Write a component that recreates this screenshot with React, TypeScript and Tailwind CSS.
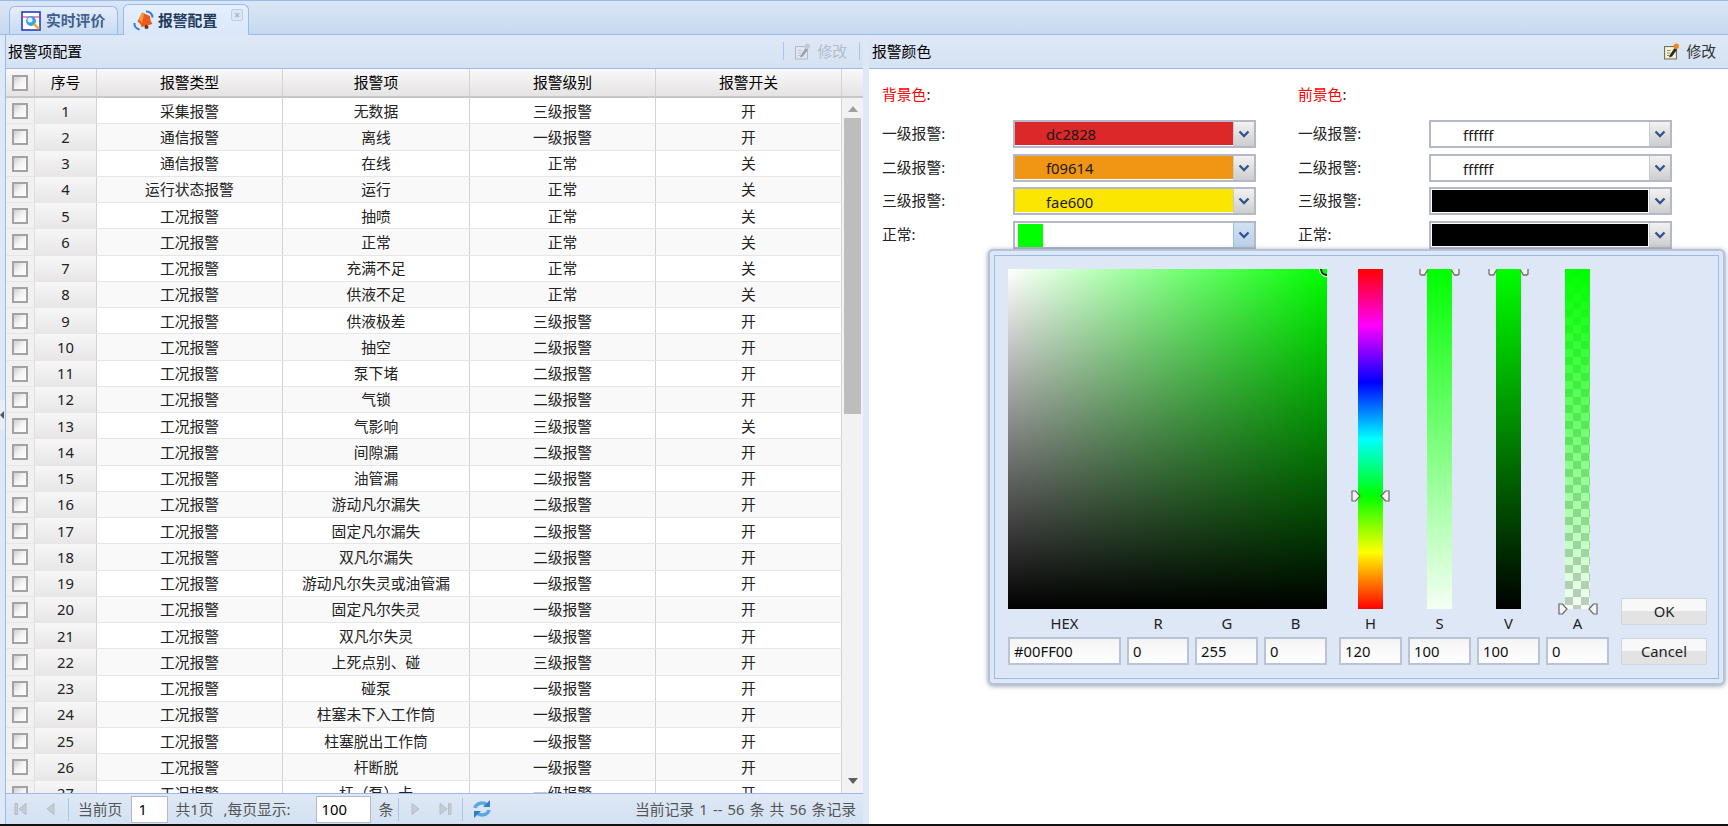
import type { ReactNode } from 'react';

const rows = [
	['采集报警', '无数据', '三级报警', '开'],
	['通信报警', '离线', '一级报警', '开'],
	['通信报警', '在线', '正常', '关'],
	['运行状态报警', '运行', '正常', '关'],
	['工况报警', '抽喷', '正常', '关'],
	['工况报警', '正常', '正常', '关'],
	['工况报警', '充满不足', '正常', '关'],
	['工况报警', '供液不足', '正常', '关'],
	['工况报警', '供液极差', '三级报警', '开'],
	['工况报警', '抽空', '二级报警', '开'],
	['工况报警', '泵下堵', '二级报警', '开'],
	['工况报警', '气锁', '二级报警', '开'],
	['工况报警', '气影响', '三级报警', '关'],
	['工况报警', '间隙漏', '二级报警', '开'],
	['工况报警', '油管漏', '二级报警', '开'],
	['工况报警', '游动凡尔漏失', '二级报警', '开'],
	['工况报警', '固定凡尔漏失', '二级报警', '开'],
	['工况报警', '双凡尔漏失', '二级报警', '开'],
	['工况报警', '游动凡尔失灵或油管漏', '一级报警', '开'],
	['工况报警', '固定凡尔失灵', '一级报警', '开'],
	['工况报警', '双凡尔失灵', '一级报警', '开'],
	['工况报警', '上死点别、碰', '三级报警', '开'],
	['工况报警', '碰泵', '一级报警', '开'],
	['工况报警', '柱塞未下入工作筒', '一级报警', '开'],
	['工况报警', '柱塞脱出工作筒', '一级报警', '开'],
	['工况报警', '杆断脱', '一级报警', '开'],
	['工况报警', '杆（泵）卡', '一级报警', '开'],
];

const fontClass = "font-['Noto_Sans','Noto_Sans_CJK_SC',sans-serif]";

function Checkbox() {
	return (
		<span className="block h-[16px] w-[16px] border-2 border-[#a3a3a3] bg-linear-to-br/srgb from-[#cfcfcf] via-[#f4f4f4] to-white" />
	);
}

function EditIcon({ faded = false }: { faded?: boolean }) {
	return (
		<svg width="15" height="17" viewBox="0 0 15 17" className={faded ? 'opacity-35 grayscale' : ''}>
			<rect x="0.5" y="3.5" width="12" height="12.500" fill="#ece6c4" stroke="#6f6f62" />
			<rect x="2" y="5" width="9" height="9.500" fill="#f7f3dc" />
			<path d="M3 7.500h3.500M3 10h3M3 12.500h2.500" stroke="#8a8a70" />
			<path d="M5.500 12.500 10.500 5l2.500 1.800-5 6.700-2.800 1z" fill="#2e2b1c" />
			<circle cx="12.300" cy="3.200" r="2.700" fill="#ee8a1d" />
		</svg>
	);
}

function PanelHeader({ children }: { children: ReactNode }) {
	return (
		<div className="flex h-[34px] shrink-0 items-center border-b border-[#99bbe8] bg-linear-to-b/srgb from-[#dfe8f6] to-[#d5e2f2] pb-px text-black">
			{children}
		</div>
	);
}

function Cell({ width, children, divider = true }: { width: string; children: ReactNode; divider?: boolean }) {
	return (
		<div className={`flex h-full shrink-0 items-center justify-center ${width} ${divider ? 'border-r border-[#d3d3d3]' : ''}`}>
			{children}
		</div>
	);
}

function AlarmGrid() {
	return (
		<div className="flex min-h-0 flex-1 flex-col bg-white">
			<div className="flex h-[29px] shrink-0 items-center border-b-2 border-[#c9c7c7] bg-linear-to-b/srgb from-[#f9f9f9] to-[#e5e3e3] text-black">
				<Cell width="w-[29px]"><Checkbox /></Cell>
				<Cell width="w-[62px]">序号</Cell>
				<Cell width="w-[186px]">报警类型</Cell>
				<Cell width="w-[187px]">报警项</Cell>
				<Cell width="w-[186px]">报警级别</Cell>
				<Cell width="w-[186px]">报警开关</Cell>
			</div>
			<div className="flex min-h-0 flex-1">
				<div className="min-w-0 flex-1 overflow-hidden">
					{rows.map((row, index) => (
						<div
							key={index}
							className={`flex h-[26.25px] items-center border-b border-[#e6e6e6] text-[#222] ${index % 2 ? 'bg-[#f9f9f9]' : 'bg-white'}`}
						>
							<div className="flex h-full w-[29px] shrink-0 items-center justify-center border-r border-[#e0e0e0] bg-[#f2f1f1] pt-px">
								<Checkbox />
							</div>
							<div className="flex h-full w-[62px] shrink-0 items-center justify-center border-r border-[#d3d3d3] bg-linear-to-b/srgb from-[#f7f7f7] to-[#e8e6e6]">
								{index + 1}
							</div>
							<Cell width="w-[186px]">{row[0]}</Cell>
							<Cell width="w-[187px]">{row[1]}</Cell>
							<Cell width="w-[186px]">{row[2]}</Cell>
							<Cell width="w-[186px]">{row[3]}</Cell>
						</div>
					))}
				</div>
				<div className="flex w-[21px] shrink-0 flex-col items-center bg-[#f2f2f2] pt-[8px]">
					<svg width="10" height="6" viewBox="0 0 10 6" className="mb-[6px] shrink-0">
						<path d="M5 0 10 6H0z" fill="#a0a0a0" />
					</svg>
					<div className="h-[296px] w-[17px] shrink-0 bg-[#bdbdbd]" />
					<div className="flex-1" />
					<svg width="10" height="6" viewBox="0 0 10 6" className="mb-[9px] shrink-0">
						<path d="M0 0h10L5 6z" fill="#5e5e5e" />
					</svg>
				</div>
			</div>
		</div>
	);
}

function PagerArrow({ d }: { d: string }) {
	return (
		<svg width="16" height="16" viewBox="0 0 16 16" className="shrink-0">
			<path d={d} fill="#c6ccd5" stroke="#b5bcc7" />
		</svg>
	);
}

function PagerSep() {
	return <span className="block h-[23px] w-px shrink-0 bg-[#a9c6ec]" />;
}

function Pager() {
	return (
		<div className="flex h-[31px] shrink-0 items-center border-t border-[#99bbe8] bg-linear-to-b/srgb from-[#dfe8f6] to-[#d3e1f1] text-[#555]">
			<span className="ml-[7px]"><PagerArrow d="M2 2.500h2.500v11H2zM13 2.500v11L6 8z" /></span>
			<span className="ml-[13px]"><PagerArrow d="M12 2.500v11L5 8z" /></span>
			<span className="ml-[10px]"><PagerSep /></span>
			<span className="ml-[9px]">当前页</span>
			<span className="ml-[9px] flex h-[27px] w-[37px] items-center border border-[#b5b8c8] bg-white pl-[6px] text-black">1</span>
			<span className="ml-[7px]">共1页</span>
			<span className="ml-[10px]">,每页显示:</span>
			<span className="ml-[25px] flex h-[27px] w-[55px] items-center border border-[#b5b8c8] bg-white pl-[5px] text-black">100</span>
			<span className="ml-[8px]">条</span>
			<span className="ml-[5px]"><PagerSep /></span>
			<span className="ml-[9px]"><PagerArrow d="M4 2.500v11L11 8z" /></span>
			<span className="ml-[13px]"><PagerArrow d="M3 2.500v11L10 8zM11.500 2.500H14v11h-2.500z" /></span>
			<span className="ml-[9px]"><PagerSep /></span>
			<svg width="20" height="20" viewBox="0 0 20 20" className="ml-[9px] shrink-0" fill="none">
				<path d="M3 9a7 6 0 0 1 12-3" stroke="#5aa6e2" strokeWidth="3.500" />
				<path d="M18 1v7h-7z" fill="#2f7fc8" />
				<path d="M17 11a7 6 0 0 1-12 3" stroke="#5aa6e2" strokeWidth="3.500" />
				<path d="M2 19v-7h7z" fill="#2f7fc8" />
			</svg>
			<span className="ml-auto pr-[7px] [word-spacing:1.300px]">当前记录 1 -- 56 条 共 56 条记录</span>
		</div>
	);
}

function ColorSelect({ fill, text, swatch = false, focused = false }: { fill: string; text?: string; swatch?: boolean; focused?: boolean }) {
	const inner = swatch ? 'pl-[3px] pt-px' : fill === 'bg-white' || fill === 'bg-black' ? 'p-px' : 'pb-px';
	return (
		<div className="flex h-[28px] items-stretch border-2 border-[#b5b8c8] bg-white">
			<div className={`flex min-w-0 flex-1 items-stretch ${inner}`}>
				{swatch ? (
					<div className={`${fill} w-[25px]`} />
				) : (
					<div className={`${fill} flex flex-1 items-center pl-[31px] pt-[2px] text-[#1a1a1a]`}>{text}</div>
				)}
			</div>
			<div className={`flex w-[21px] shrink-0 items-center justify-center border-l bg-linear-to-b/srgb ${focused ? 'border-[#9cbde6] from-[#d2e1f3] to-[#b9d0ea]' : 'border-[#c6c9d6] from-[#f2f2f2] to-[#cdcdcd]'}`}>
				<svg width="12" height="8" viewBox="0 0 12 8" fill="none">
					<path d="M1.500 1.500 6 6l4.500-4.500" stroke="#33568f" strokeWidth="2.400" />
				</svg>
			</div>
		</div>
	);
}

function ColorForm() {
	const labels = ['一级报警', '二级报警', '三级报警', '正常'];
	const back = [
		<ColorSelect key="a" fill="bg-[#dc2828]" text="dc2828" />,
		<ColorSelect key="b" fill="bg-[#f09614]" text="f09614" />,
		<ColorSelect key="c" fill="bg-[#fae600]" text="fae600" />,
		<ColorSelect key="d" fill="bg-[#00ff00]" swatch focused />,
	];
	const front = [
		<ColorSelect key="a" fill="bg-white" text="ffffff" />,
		<ColorSelect key="b" fill="bg-white" text="ffffff" />,
		<ColorSelect key="c" fill="bg-black" text="" />,
		<ColorSelect key="d" fill="bg-black" text="" />,
	];
	return (
		<div className="grid grid-cols-[131px_243px_42px_131px_243px] pl-[13px] pt-[13px] text-[#222]">
			<div className="col-span-2 h-[38px] leading-[24px]">
				<span className="text-[#ff0000]">背景色</span>:
			</div>
			<div />
			<div className="col-span-2 h-[38px] leading-[24px]">
				<span className="text-[#ff0000]">前景色</span>:
			</div>
			{labels.map((label, index) => (
				<div key={label} className="contents">
					<div className="flex h-[33.7px] items-start pt-[2px]">{label}:</div>
					<div>{back[index]}</div>
					<div />
					<div className="flex h-[33.7px] items-start pt-[2px]">{label}:</div>
					<div>{front[index]}</div>
				</div>
			))}
		</div>
	);
}

function Handle({ side, className }: { side: 'left' | 'right' | 'top'; className: string }) {
	const rotate = side === 'right' ? 'rotate-180' : '';
	if (side === 'top') {
		return (
			<svg width="9" height="7" viewBox="0 0 9 7" className={`absolute ${className}`}>
				<path d="M1 0v4.500q0 1.500 1.500 1.500H5.500L8.500 1" fill="#f2f2f2" stroke="#6d6d6d" strokeWidth="1.300" />
			</svg>
		);
	}
	return (
		<svg width="10" height="12" viewBox="0 0 10 12" className={`absolute ${rotate} ${className}`}>
			<path d="M1 1h3.500L9 6l-4.500 5H1z" fill="#f4f4f4" stroke="#666" strokeWidth="1.200" />
		</svg>
	);
}

function PickerField({ value }: { value: string }) {
	return (
		<div className="flex h-[28px] items-center border-2 border-[#b9c3d6] bg-linear-to-b/srgb from-[#f4f4f4] to-white pl-[4px] text-[#111]">
			{value}
		</div>
	);
}

function PickerColumn({ label, value, children }: { label: string; value: string; children: ReactNode }) {
	return (
		<div className="flex w-[63px] flex-col">
			<div className="flex h-[340px] justify-center">
				<div className="relative h-full w-[25px]">{children}</div>
			</div>
			<div className="flex h-[28px] items-center justify-center text-[#222]">{label}</div>
			<PickerField value={value} />
		</div>
	);
}

function PickerButton({ label }: { label: string }) {
	return (
		<div className="flex h-[27px] w-[86px] items-center justify-center rounded-[2px] border border-[#d0d5dc] bg-linear-to-b/srgb from-[#f8f8f8] from-50% to-[#e3e3e3] to-50% text-[#222]">
			{label}
		</div>
	);
}

function ColorPicker() {
	return (
		<div className={`absolute left-[988px] top-[249px] h-[436px] w-[737px] rounded-[5px] border-2 border-[#b4c3d9] bg-[#dee7f6] p-[4px] shadow-[0_1px_5px_rgba(70,90,120,0.6)] ${fontClass} text-[14.800px]`}>
			<div className="flex h-[424px] border border-[#99bbe8] pl-[13px] pt-[13px]">
				<div className="flex w-[319px] flex-col">
					<div className="h-[340px] bg-linear-to-r/srgb from-white to-[#00ff00]">
						<div className="relative h-full overflow-hidden bg-linear-to-b/srgb from-transparent to-black">
							<span className="absolute right-[-6px] top-[-6px] h-[13px] w-[13px] rounded-full border-2 border-[#222] outline outline-1 outline-white" />
						</div>
					</div>
					<div className="flex h-[28px] items-center text-[#222]">
						<span className="w-[113px] text-center">HEX</span>
						<span className="ml-[6px] w-[62px] text-center">R</span>
						<span className="ml-[7px] w-[62px] text-center">G</span>
						<span className="ml-[6px] w-[63px] text-center">B</span>
					</div>
					<div className="flex gap-[6px]">
						<div className="w-[113px]"><PickerField value="#00FF00" /></div>
						<div className="w-[62px]"><PickerField value="0" /></div>
						<div className="w-[63px]"><PickerField value="255" /></div>
						<div className="w-[63px]"><PickerField value="0" /></div>
					</div>
				</div>
				<div className="ml-[12px] flex gap-[6px]">
					<PickerColumn label="H" value="120">
						<div className="h-full bg-[linear-gradient(to_bottom,#f00,#f0f,#00f,#0ff,#0f0,#ff0,#f00)]" />
						<Handle side="left" className="left-[-7px] top-[221px]" />
						<Handle side="right" className="right-[-7px] top-[221px]" />
					</PickerColumn>
					<PickerColumn label="S" value="100">
						<div className="h-full bg-linear-to-b/srgb from-[#00ff00] to-[#f4fff4]" />
						<Handle side="top" className="left-[-8px] top-0" />
						<Handle side="top" className="right-[-8px] top-0 -scale-x-100" />
					</PickerColumn>
					<PickerColumn label="V" value="100">
						<div className="h-full bg-linear-to-b/srgb from-[#00ff00] to-black" />
						<Handle side="top" className="left-[-8px] top-0" />
						<Handle side="top" className="right-[-8px] top-0 -scale-x-100" />
					</PickerColumn>
					<PickerColumn label="A" value="0">
						<div className="h-full bg-[repeating-conic-gradient(#c9c9c9_0_25%,#ffffff_0_50%)] bg-[length:16px_16px]">
							<div className="h-full bg-linear-to-b/srgb from-[#00ff00] to-[#00ff000c]" />
						</div>
						<Handle side="left" className="left-[-7px] bottom-[-6px]" />
						<Handle side="right" className="right-[-8px] bottom-[-6px]" />
					</PickerColumn>
				</div>
				<div className="ml-[12px] flex h-[396px] flex-col justify-end gap-[13px]">
					<PickerButton label="OK" />
					<PickerButton label="Cancel" />
				</div>
			</div>
		</div>
	);
}

export default function App() {
	return (
		<div className={`relative flex h-screen w-full flex-col overflow-hidden bg-[#dfe8f6] text-[14.800px] ${fontClass}`}>
			<div className="flex h-[35px] shrink-0 items-end gap-[5px] border-y border-y-[#99bbe8] bg-linear-to-b/srgb from-[#dbe6f5] to-[#c7d9f0] pl-[9px]">
				<div className="flex h-[28px] w-[109px] items-center rounded-t-[6px] border border-b-0 border-[#99bbe8] bg-linear-to-b/srgb from-[#e6eefa] to-[#c8dbf3] pl-[11px] font-semibold text-[#3f5f8f]">
					<svg width="20" height="20" viewBox="0 0 20 20" className="mr-[5px] shrink-0">
						<rect x="1" y="1" width="18" height="18" fill="#fff" stroke="#1c2fc0" strokeWidth="1.500" />
						<rect x="2" y="5" width="16" height="2" fill="#f08ab0" />
						<circle cx="10" cy="10" r="5" fill="#3d9fe8" />
						<circle cx="9" cy="9" r="2.500" fill="#dff2ff" />
						<path d="m13 13 5 5" stroke="#e8b02c" strokeWidth="2.500" />
					</svg>
					实时评价
				</div>
				<div className="relative -mb-px flex h-[31px] w-[126px] items-center rounded-t-[6px] border border-b-0 border-[#99bbe8] bg-linear-to-b/srgb from-[#e6f0fc] to-[#d7e7fb] pl-[9px] font-semibold text-[#243a5c]">
					<svg width="21" height="21" viewBox="0 0 21 21" className="mr-[4px] shrink-0">
						<path d="M1.500 13a6 6 0 0 0 5 6.500" fill="none" stroke="#3b78c9" strokeWidth="2" />
						<path d="M13 1.500a6 6 0 0 1 6.500 6" fill="none" stroke="#3b78c9" strokeWidth="2" />
						<path d="M9 2.500 17 6l.500 4.500 2 3.500-11 3-1-3-3-2.500z" fill="#ea5a1c" />
						<path d="M6 9 9 2.500 11 4 9 13z" fill="#f79a3c" />
						<circle cx="13.500" cy="17" r="2" fill="#7a2a08" />
					</svg>
					报警配置
					<span className="absolute right-[5px] top-[4px] flex h-[12px] w-[12px] items-center justify-center rounded-[2px] border border-[#b9cfea] bg-[#dbe7f6] text-[10px] font-bold leading-none text-[#9fb0c8]">×</span>
				</div>
			</div>
			<div className="flex min-h-0 flex-1">
				<div className="w-[6px] shrink-0 border-r border-[#99bbe8] bg-[#dfe8f6]" />
				<div className="flex w-[857px] shrink-0 flex-col">
					<PanelHeader>
						<span className="pl-[2px]">报警项配置</span>
						<span className="ml-auto h-[18px] w-px bg-[#a9c6ec]" />
						<span className="ml-[11px] flex items-center gap-[7px] text-[#b4bcc8]">
							<EditIcon faded />
							修改
						</span>
						<span className="ml-[12px] mr-[3px] h-[18px] w-px bg-[#a9c6ec]" />
					</PanelHeader>
					<AlarmGrid />
					<Pager />
				</div>
				<div className="w-[6px] shrink-0 bg-[#dfe8f6]" />
				<div className="flex min-w-0 flex-1 flex-col bg-white">
					<PanelHeader>
						<span className="pl-[3px]">报警颜色</span>
						<span className="ml-auto mr-[12px] flex items-center gap-[7px] text-[#333]">
							<EditIcon />
							修改
						</span>
					</PanelHeader>
					<ColorForm />
				</div>
			</div>
			<div className="h-[2px] shrink-0 bg-[#111]" />
			<ColorPicker />
			<span className="absolute left-0 top-[400px] flex h-[30px] w-[5px] items-center bg-[#e9eef6]">
				<svg width="4" height="8" viewBox="0 0 4 8"><path d="M4 0v8L0 4z" fill="#555" /></svg>
			</span>
		</div>
	);
}
